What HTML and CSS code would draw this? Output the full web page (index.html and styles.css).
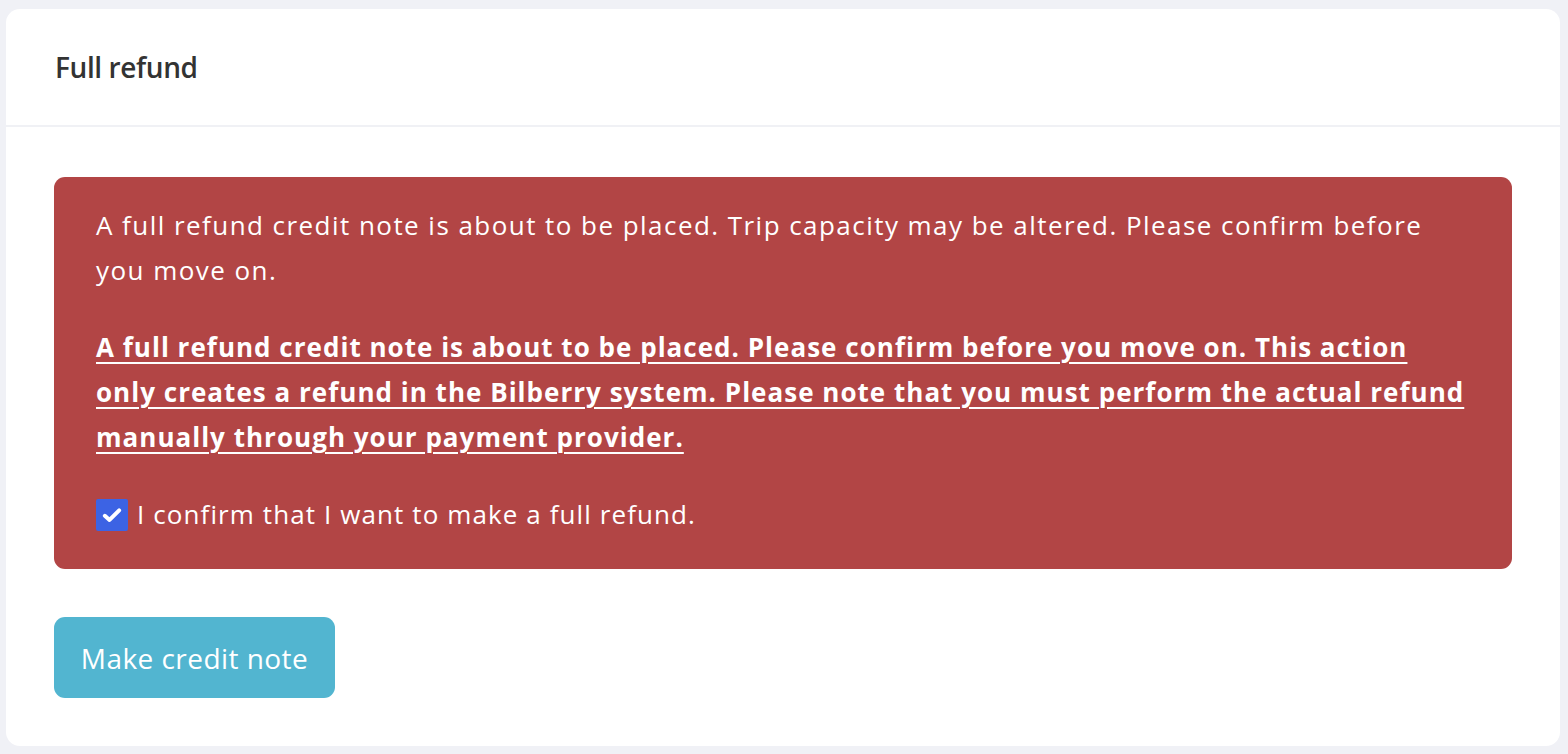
FILE: index.html
```html
<!DOCTYPE html>
<html lang="en">
<head>
<meta charset="utf-8">
<title>Full refund</title>
<link rel="stylesheet" href="styles.css">
</head>
<body>
<div class="card">
  <div class="card-header">
    <h2 class="card-title">Full refund</h2>
  </div>
  <div class="card-body">
    <div class="alert">
      <p class="alert-text">A full refund credit note is about to be placed. Trip capacity may be altered. Please confirm before you move on.</p>
      <p class="alert-strong">A full refund credit note is about to be placed. Please confirm before you move on. This action only creates a refund in the Bilberry system. Please note that you must perform the actual refund manually through your payment provider.</p>
      <label class="confirm">
        <span class="checkbox">
          <svg viewBox="0 0 16 16" width="22" height="22"><path d="M2.8 8.6 L6.2 11.6 L13.2 4.6" fill="none" stroke="#fff" stroke-width="2.9" stroke-linecap="round" stroke-linejoin="round"/></svg>
        </span>
        <span class="confirm-text">I confirm that I want to make a full refund.</span>
      </label>
    </div>
    <button class="btn" type="button">Make credit note</button>
  </div>
</div>
</body>
</html>
```

FILE: styles.css
```css
html, body {
  margin: 0;
  padding: 0;
}
body {
  background: #f0f1f6;
  padding: 9px 8px 8px 6px;
  font-family: "Open Sans", "Noto Sans", sans-serif;
}
.card {
  background: #ffffff;
  border-radius: 14px;
  overflow: hidden;
}
.card-header {
  height: 118px;
  display: flex;
  align-items: center;
  padding: 0 49px;
  border-bottom: 2px solid #f0f1f5;
  box-sizing: border-box;
}
.card-title {
  margin: 0;
  font-size: 28px;
  font-weight: 600;
  color: #333333;
  letter-spacing: -0.4px;
}
.card-body {
  padding: 50px 48px 48px 48px;
}
.alert {
  background: #b24545;
  border-radius: 11px;
  padding: 26px 42px 32px 42px;
  color: #ffffff;
  font-size: 26px;
  line-height: 45px;
  letter-spacing: 1.1px;
}
.alert p {
  margin: 0 0 32px 0;
}
.alert-text {
  letter-spacing: 1.45px;
}
.alert-strong {
  font-weight: 700;
  letter-spacing: 1.02px;
  text-decoration: underline;
  text-decoration-thickness: 2px;
  text-underline-offset: 5px;
}
.confirm {
  display: flex;
  align-items: center;
  gap: 9px;
}
.checkbox {
  width: 32px;
  height: 32px;
  background: #3c63e4;
  border-radius: 2px;
  display: flex;
  align-items: center;
  justify-content: center;
  flex: none;
}
.btn {
  display: block;
  margin-top: 48px;
  background: #52b5d0;
  color: #ffffff;
  border: none;
  border-radius: 11px;
  width: 281px;
  height: 81px;
  font-family: "Open Sans", "Noto Sans", sans-serif;
  font-size: 28px;
  letter-spacing: 0.45px;
  padding: 0;
}
```
